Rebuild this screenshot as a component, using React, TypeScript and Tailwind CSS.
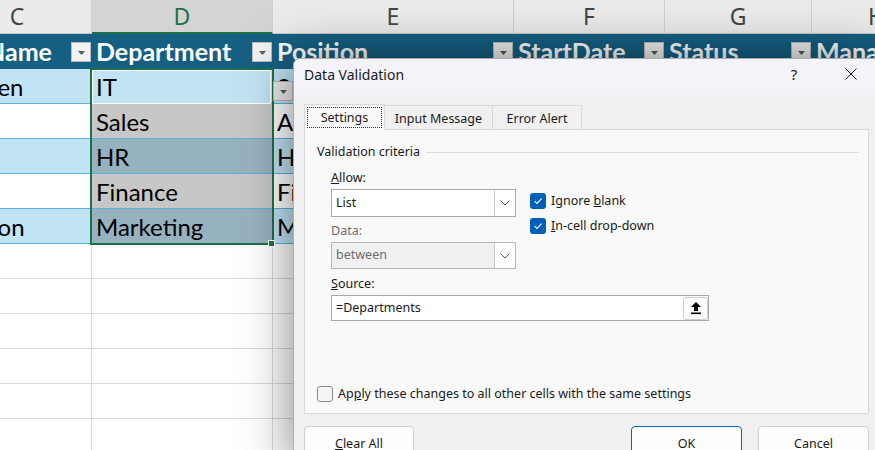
import React from "react";

const W = ["w-[149px]", "w-[181px]", "w-[241px]", "w-[151px]", "w-[147px]", "w-[130px]"];

function Tri() {
  return (
    <svg width="7" height="4" viewBox="0 0 7 4">
      <path d="M0 0 L7 0 L3.5 4 Z" fill="#5a5a5a" />
    </svg>
  );
}

function FilterBtn() {
  return (
    <div className="ml-auto mr-[1px] w-[20px] h-[20px] shrink-0 bg-[#f2f2f2] border border-[#bcbcbc] flex items-center justify-center pt-[2px]">
      <Tri />
    </div>
  );
}

type Row = { c: string; cPad: string; d: string; e: string; f: string; g: string; h: string; band: boolean };

const rows: Row[] = [
  { c: "Chen", cPad: "pl-[25px]", d: "IT", e: "Software Engineer", f: "2021-03-15", g: "Active", h: "Sarah Kim", band: true },
  { c: "Lee", cPad: "pl-[4px]", d: "Sales", e: "Account Manager", f: "2020-07-01", g: "Active", h: "Tom Baker", band: false },
  { c: "Kim", cPad: "pl-[4px]", d: "HR", e: "HR Specialist", f: "2019-11-12", g: "Leave", h: "Anna Lopez", band: true },
  { c: "Ng", cPad: "pl-[4px]", d: "Finance", e: "Financial Analyst", f: "2022-01-10", g: "Active", h: "Mark Diaz", band: false },
  { c: "Wilson", cPad: "pl-[8px]", d: "Marketing", e: "Marketing Lead", f: "2018-05-21", g: "Active", h: "Sarah Kim", band: true },
];

function ColHeader() {
  const letters = ["C", "D", "E", "F", "G", "H"];
  return (
    <div className="flex h-[34px]">
      {letters.map((l, i) => (
        <div
          key={l}
          className={`${W[i]} shrink-0 flex items-center justify-center border-r border-[#cfcfcf] text-[23px] [font-family:'Noto_Sans',sans-serif] ${
            i === 1
              ? "bg-[#d4d4d4] border-b-2 border-b-[#1e7145] text-[#1e7145]"
              : "bg-[#ebebeb] border-b border-b-[#c8c8c8] text-[#444444]"
          }`}
        >
          {l}
        </div>
      ))}
    </div>
  );
}

function TableHeader() {
  const names = ["Name", "Department", "Position", "StartDate", "Status", "Manager"];
  return (
    <div className="flex h-[35px] bg-[#156082] text-white font-bold text-[25px]">
      {names.map((n, i) => (
        <div key={n} className={`${W[i]} shrink-0 flex items-center overflow-hidden whitespace-nowrap ${i === 0 ? "pl-[43px]" : "pl-[4px]"}`}>
          <span>{n}</span>
          {i < 5 && <FilterBtn />}
        </div>
      ))}
    </div>
  );
}

function DataRow({ r, idx }: { r: Row; idx: number }) {
  const base = r.band ? "bg-[#c1e4f5]" : "bg-white";
  const dBg = idx === 0 ? "bg-[#c1e4f5]" : r.band ? "bg-[#97b2bf]" : "bg-[#c7c7c7]";
  const vals = [r.c, r.d, r.e, r.f, r.g, r.h];
  return (
    <div className="flex h-[35px] border-b border-[#5fb0de] text-[24px] text-black">
      {vals.map((v, i) => (
        <div
          key={i}
          className={`${W[i]} shrink-0 flex items-center pt-[1px] overflow-hidden whitespace-nowrap ${i === 1 ? dBg : base} ${i === 0 ? r.cPad : "pl-[4px]"}`}
        >
          {v}
        </div>
      ))}
    </div>
  );
}

function EmptyRow() {
  return (
    <div className="flex h-[35px]">
      {W.map((w, i) => (
        <div key={i} className={`${w} shrink-0 border-r border-b border-[#dadada]`} />
      ))}
    </div>
  );
}

function Check({ checked }: { checked: boolean }) {
  if (checked) {
    return (
      <div className="w-[16px] h-[16px] shrink-0 rounded-[3px] bg-[#005fb8] flex items-center justify-center">
        <svg width="12" height="12" viewBox="0 0 12 12">
          <path d="M2.6 6.2 L5 8.5 L9.6 3.6" fill="none" stroke="white" strokeWidth="1.1" />
        </svg>
      </div>
    );
  }
  return <div className="w-[16px] h-[16px] shrink-0 rounded-[3px] border border-[#8a8a8a] bg-[#f5f5f5]" />;
}

function Chevron() {
  return (
    <svg width="10" height="6" viewBox="0 0 10 6">
      <path d="M0.5 0.5 L5 5 L9.5 0.5" fill="none" stroke="#555" strokeWidth="1" />
    </svg>
  );
}

function Select({ value, disabled }: { value: string; disabled?: boolean }) {
  return (
    <div
      className={`flex w-[185px] border ${
        disabled ? "h-[27px] bg-[#f0f0f0] border-[#b8b8b8] text-[#6d6d6d]" : "h-[28px] bg-white border-[#a8a8a8] text-[#1a1a1a]"
      }`}
    >
      <div className="flex-1 flex items-center pl-[4px]">{value}</div>
      <div className="w-[21px] border-l border-[#c8c8c8] bg-white flex items-center justify-center">
        <Chevron />
      </div>
    </div>
  );
}

function Btn({ children, primary, w }: { children: React.ReactNode; primary?: boolean; w: string }) {
  return (
    <div
      className={`${w} h-[32px] pt-[4px] rounded-[4px] bg-[#fdfdfd] border flex items-center justify-center ${
        primary ? "border-[#0067c0]" : "border-[#d0d0d0]"
      }`}
    >
      {children}
    </div>
  );
}

function Dialog() {
  return (
    <div className="absolute left-[293px] top-[58px] w-[587px] h-[410px] rounded-[7px] border border-[#adadad] bg-[#f0f0f0] shadow-[0_0_50px_rgba(0,0,0,0.5)] [font-family:'Noto_Sans',sans-serif] text-[12.5px] text-[#1a1a1a]">
      <div className="h-[36px] rounded-t-[7px] bg-[#f3f3f9] flex items-center pl-[10px] pb-[6px]">
        <div className="text-[14px]">Data Validation</div>
        <div className="ml-auto flex items-center h-full">
          <div className="w-[40px] flex items-center justify-center text-[15px]">?</div>
          <div className="w-[46px] ml-[14px] mr-[5px] flex items-center justify-center">
            <svg width="12" height="12" viewBox="0 0 12 12">
              <path d="M0.5 0.5 L11.5 11.5 M11.5 0.5 L0.5 11.5" stroke="#1a1a1a" strokeWidth="1" />
            </svg>
          </div>
        </div>
      </div>
      <div className="px-[10px]">
        <div className="mt-[9px] flex items-end h-[25px]">
          <div className="relative z-10 w-[81px] h-[26px] mb-[-1px] border border-b-0 border-[#d9d9d9] bg-[#f9f9f9] flex">
            <div className="flex-1 m-[2px] mb-[2px] pt-[2px] border border-dotted border-[#333] flex items-center justify-center">Settings</div>
          </div>
          <div className="w-[108px] h-[24px] pt-[3px] border border-l-0 border-b-0 border-[#d9d9d9] flex items-center justify-center">Input Message</div>
          <div className="w-[89px] h-[24px] pt-[3px] border border-l-0 border-b-0 border-[#d9d9d9] flex items-center justify-center">Error Alert</div>
        </div>
        <div className="h-[285px] border border-[#d9d9d9] bg-[#f9f9f9] pl-[12px] pt-[13px] flex flex-col">
          <div className="flex items-center h-[18px]">
            <span>Validation criteria</span>
            <div className="flex-1 h-px bg-[#dcdcdc] ml-[6px] mr-[9px]" />
          </div>
          <div className="ml-[14px]">
            <div className="flex">
              <div className="flex flex-col">
                <div className="mt-[8px] h-[18px] leading-[18px]">
                  <u>A</u>llow:
                </div>
                <div className="mt-[2px]">
                  <Select value="List" />
                </div>
                <div className="mt-[5px] h-[18px] leading-[18px] text-[#6d6d6d]">Data:</div>
                <div className="mt-[2px]">
                  <Select value="between" disabled />
                </div>
              </div>
              <div className="ml-[14px] pt-[32px] flex flex-col">
                <div className="flex items-center h-[16px]">
                  <Check checked />
                  <span className="ml-[5px]">
                    Ignore <u>b</u>lank
                  </span>
                </div>
                <div className="flex items-center h-[16px] mt-[9px]">
                  <Check checked />
                  <span className="ml-[5px]">
                    <u>I</u>n-cell drop-down
                  </span>
                </div>
              </div>
            </div>
            <div className="mt-[6px] h-[18px] leading-[18px]">
              <u>S</u>ource:
            </div>
            <div className="mt-[2px] w-[378px] h-[26px] border border-[#a8a8a8] bg-white flex items-center">
              <span className="pl-[4px]">=Departments</span>
              <div className="ml-auto w-[25px] h-[23px] border border-[#cfcfcf] rounded-[3px] bg-[#fdfdfd] flex items-center justify-center">
                <svg width="12" height="14" viewBox="0 0 12 14">
                  <path d="M6 1 L11 6 L8 6 L8 10 L4 10 L4 6 L1 6 Z" fill="#000" />
                  <rect x="1" y="11.5" width="10" height="1.6" fill="#000" />
                </svg>
              </div>
            </div>
          </div>
          <div className="mt-[65px] flex items-center h-[16px]">
            <Check checked={false} />
            <span className="ml-[5px]">
              Ap<u>p</u>ly these changes to all other cells with the same settings
            </span>
          </div>
        </div>
        <div className="mt-[12px] flex">
          <Btn w="w-[110px]">
            <span>
              <u>C</u>lear All
            </span>
          </Btn>
          <div className="ml-auto flex gap-[16px]">
            <Btn w="w-[111px]" primary>
              OK
            </Btn>
            <Btn w="w-[111px]">Cancel</Btn>
          </div>
        </div>
      </div>
    </div>
  );
}

export default function App() {
  return (
    <div className="relative w-[875px] h-[450px] overflow-hidden bg-white [font-family:Lato,sans-serif]">
      <div className="ml-[-57px] flex flex-col w-max">
        <ColHeader />
        <TableHeader />
        {rows.map((r, i) => (
          <DataRow key={i} r={r} idx={i} />
        ))}
        <EmptyRow />
        <EmptyRow />
        <EmptyRow />
        <EmptyRow />
        <EmptyRow />
        <EmptyRow />
      </div>
      {/* selection overlay */}
      <div className="absolute left-[90px] top-[68px] w-[184px] h-[177px] border-2 border-[#1e7145]" />
      <div className="absolute left-[92px] top-[70px] w-[179px] h-[34px] border border-white" />
      <div className="absolute left-[268px] top-[240px] w-[7px] h-[7px] bg-[#1e7145] border border-white" />
      {/* in-cell dropdown */}
      <div className="absolute left-[273px] top-[81px] w-[20px] h-[20px] bg-[#ececec] border border-[#b8b8b8] flex items-center justify-center pt-[2px]">
        <Tri />
      </div>
      <Dialog />
    </div>
  );
}
